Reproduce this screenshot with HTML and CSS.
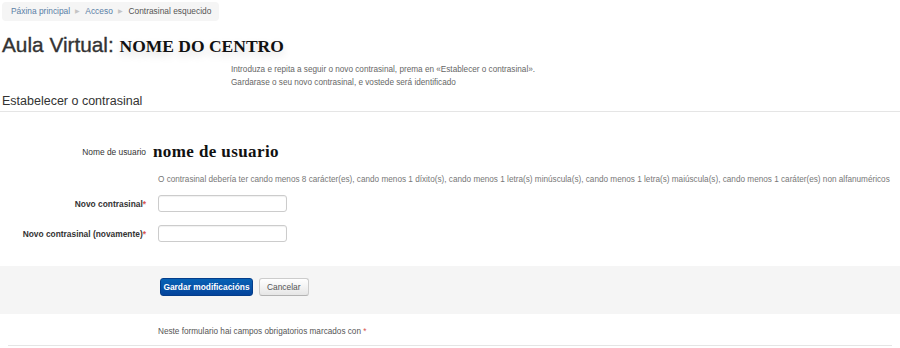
FILE: index.html
```html
<!DOCTYPE html>
<html lang="gl">
<head>
    <meta charset="UTF-8">
    <meta name="viewport" content="width=device-width, initial-scale=1.0">
    <title>Contrasinal esquecido</title>
    <link rel="stylesheet" href="styles.css">
</head>
<body>
    <!-- Breadcrumb -->
    <nav class="breadcrumb">
        <a href="#">Páxina principal</a>
        <span class="sep">&#9654;</span>
        <a href="#">Acceso</a>
        <span class="sep">&#9654;</span>
        <span class="current">Contrasinal esquecido</span>
    </nav>

    <h2 class="site-title">Aula Virtual: <span class="centre">NOME DO CENTRO</span></h2>

    <div class="intro">
        <p>Introduza e repita a seguir o novo contrasinal, prema en «Establecer o contrasinal».</p>
        <p>Gardarase o seu novo contrasinal, e vostede será identificado</p>
    </div>

    <!-- Password form -->
    <form class="mform">
        <div class="legend">Estabelecer o contrasinal</div>

        <div class="form-row user-row">
            <label>Nome de usuario</label>
            <span class="username">nome de usuario</span>
        </div>

        <div class="form-row policy-row">
            <span></span>
            <p class="policy">O contrasinal debería ter cando menos 8 carácter(es), cando menos 1 díxito(s), cando menos 1 letra(s) minúscula(s), cando menos 1 letra(s) maiúscula(s), cando menos 1 caráter(es) non alfanuméricos</p>
        </div>

        <div class="form-row field-row">
            <label for="newpassword1">Novo contrasinal<span class="req">*</span></label>
            <input type="password" id="newpassword1">
        </div>
        <div class="form-row field-row">
            <label for="newpassword2">Novo contrasinal (novamente)<span class="req">*</span></label>
            <input type="password" id="newpassword2">
        </div>

        <div class="actions">
            <button type="button" class="btn btn-primary">Gardar modificacións</button>
            <button type="button" class="btn">Cancelar</button>
        </div>

        <p class="note">Neste formulario hai campos obrigatorios marcados con <span class="req">*</span></p>
    </form>

    <div class="footer-line"></div>
</body>
</html>
```

FILE: styles.css
```css
body {
    margin: 0;
    padding: 2px 0 0;
    font-family: "Liberation Sans", Arial, sans-serif;
    font-size: 8.2px;
    color: #333;
    background: #fff;
}
p {
    margin: 0;
}
.breadcrumb {
    display: inline-block;
    margin-left: 2px;
    padding: 4px 8px 4px 9px;
    line-height: 11px;
    background-color: #f5f5f5;
    border-radius: 4px;
    font-size: 8.4px;
}
.breadcrumb a {
    color: #5a7ea6;
    text-decoration: none;
}
.breadcrumb .sep {
    color: #c4c4c4;
    font-size: 6px;
    margin: 0 3px;
    vertical-align: 1px;
}
.breadcrumb .current {
    color: #555;
}
.site-title {
    margin: 12px 0 0 2px;
    font-size: 20.8px;
    line-height: 24px;
    font-weight: normal;
    color: #333;
    -webkit-text-stroke: 0.35px #333;
}
.site-title .centre {
    font-family: "Liberation Serif", "Times New Roman", serif;
    font-size: 17.5px;
    font-weight: bold;
    color: #111;
    -webkit-text-stroke: 0;
    text-shadow: 0 4px 8px rgba(0, 0, 0, 0.15);
}
.intro {
    margin: 6px 0 0 231px;
    color: #666;
    font-size: 8.2px;
    line-height: 12.5px;
}
.legend {
    margin-top: 4px;
    padding: 0 0 2px 2px;
    font-size: 12.5px;
    line-height: 16px;
    color: #333;
    border-bottom: 1px solid #e5e5e5;
}
.form-row {
    display: grid;
    grid-template-columns: 146px 1fr;
    column-gap: 12px;
    align-items: center;
}
.form-row label {
    text-align: right;
    font-size: 8.4px;
    color: #333;
}
.user-row {
    margin-top: 30px;
    column-gap: 7px;
}
.username {
    font-family: "Liberation Serif", "Times New Roman", serif;
    font-size: 17px;
    font-weight: bold;
    color: #111;
    letter-spacing: 0.4px;
}
.policy-row {
    margin-top: 13px;
}
.policy {
    color: #777;
    font-size: 8.2px;
    white-space: nowrap;
}
.field-row {
    margin-top: 13px;
}
.policy-row + .field-row {
    margin-top: 11px;
}
.field-row label {
    font-weight: bold;
}
input[type="password"] {
    width: 129px;
    height: 17px;
    box-sizing: border-box;
    border: 1px solid #ccc;
    border-radius: 3px;
    box-shadow: inset 0 1px 1px rgba(0, 0, 0, 0.06);
    padding: 2px 4px;
}
.req {
    color: #d9534f;
}
.actions {
    margin-top: 24px;
    padding: 12px 0 12px 160px;
    height: 24px;
    background-color: #f5f5f5;
    display: flex;
    gap: 6px;
    align-items: flex-start;
}
.btn {
    height: 18px;
    padding: 0 7px;
    font-family: "Liberation Sans", Arial, sans-serif;
    font-size: 8.4px;
    color: #555;
    white-space: nowrap;
    background: linear-gradient(#fff, #e6e6e6);
    border: 1px solid #ccc;
    border-bottom-color: #b3b3b3;
    border-radius: 3px;
    cursor: pointer;
}
.btn-primary {
    width: 93px;
    padding: 0;
    color: #fff;
    font-weight: bold;
    background: linear-gradient(#0762b5, #04449c);
    border-color: #043d8a;
}
.note {
    margin: 12px 0 0 158px;
    color: #555;
    font-size: 8.2px;
    line-height: 12px;
}
.footer-line {
    margin: 7px 8px 0;
    border-top: 1px solid #e5e5e5;
}
```
